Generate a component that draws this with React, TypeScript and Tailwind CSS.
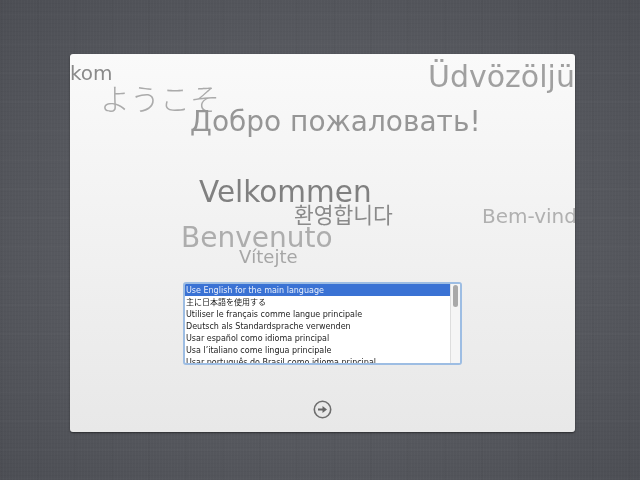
import React from 'react';

const WORDS = [
  { text: 'kom', className: 'left-0 top-[7px] text-[20px] leading-[24px] text-[#8a8a8a]' },
  { text: 'ようこそ', className: "left-[30px] top-[25px] text-[30px] leading-[36px] text-[#ababab] font-['Noto_Sans_CJK_JP',sans-serif] font-light" },
  { text: 'Üdvözöljü', className: 'left-[358px] top-[4px] text-[30px] leading-[38px] text-[#a0a0a0]' },
  { text: 'Добро пожаловать!', className: 'left-[120px] top-[50px] text-[28px] leading-[36px] text-[#969696]' },
  { text: 'Velkommen', className: 'left-[129px] top-[120px] text-[29.5px] leading-[36px] text-[#808080]' },
  { text: '환영합니다', className: "left-[224px] top-[147px] text-[21.5px] leading-[26px] text-[#8a8a8a] font-['Noto_Sans_CJK_KR',sans-serif]" },
  { text: 'Bem-vind', className: 'left-[412px] top-[149px] text-[20px] leading-[26px] text-[#b0b0b0]' },
  { text: 'Benvenuto', className: 'left-[111px] top-[166px] text-[28px] leading-[36px] text-[#adadad]' },
  { text: 'Vítejte', className: 'left-[169px] top-[191px] text-[18px] leading-[24px] text-[#a6a6a6]' },
];

const LANGUAGES = [
  'Use English for the main language',
  '主に日本語を使用する',
  'Utiliser le français comme langue principale',
  'Deutsch als Standardsprache verwenden',
  'Usar español como idioma principal',
  'Usa l’italiano come lingua principale',
  'Usar português do Brasil como idioma principal',
];

const App = () => {
  return (
    <div className="w-[640px] h-[480px] overflow-hidden pl-[70px] pt-[54px] bg-[#55575d] [background-image:repeating-linear-gradient(90deg,rgba(255,255,255,0.015)_0px,rgba(255,255,255,0.015)_1px,transparent_1px,transparent_3px),repeating-linear-gradient(0deg,rgba(0,0,0,0.025)_0px,rgba(0,0,0,0.025)_1px,transparent_1px,transparent_4px),repeating-linear-gradient(90deg,rgba(0,0,0,0.02)_0px,rgba(0,0,0,0.02)_2px,transparent_2px,transparent_37px),repeating-linear-gradient(0deg,rgba(255,255,255,0.012)_0px,rgba(255,255,255,0.012)_2px,transparent_2px,transparent_29px),radial-gradient(ellipse_at_center,#5c5e65_0%,#56585e_60%,#4c4e54_100%)] font-['DejaVu_Sans',sans-serif]">
      <div className="relative w-[505px] h-[378px] rounded-[3px] overflow-hidden flex flex-col items-center bg-gradient-to-b from-[#fafafa] to-[#e8e8e8] shadow-[0_1px_2px_rgba(0,0,0,0.5)]">
        {WORDS.map(word => (
          <div key={word.text} className={`absolute whitespace-nowrap blur-[0.4px] ${word.className}`}>
            {word.text}
          </div>
        ))}

        {/* Language list */}
        <div className="mt-[228px] w-[279px] h-[83px] shrink-0 flex border-2 border-[#9dbde3] rounded-[3px] bg-white overflow-hidden blur-[0.3px]">
          <div className="flex-1 min-w-0 overflow-hidden">
            {LANGUAGES.map((lang, i) => (
              <div
                key={lang}
                className={`h-[12px] overflow-hidden pl-[1px] text-[8px] leading-[14px] whitespace-nowrap font-['DejaVu_Sans','Noto_Sans_CJK_JP',sans-serif] ${i === 0 ? 'bg-[#3a72d4] text-[#e8eefb]' : 'text-[#222222]'}`}
              >
                {lang}
              </div>
            ))}
          </div>
          <div className="w-[10px] shrink-0 border-l border-[#dddddd] bg-[#f5f5f5] pl-[2px] pt-[1px]">
            <div className="w-[5px] h-[22px] rounded-full bg-[#a9a9a9]" />
          </div>
        </div>

        {/* Continue arrow */}
        <div className="mt-[35px]">
          <svg width="19" height="19" viewBox="0 0 19 19" fill="none">
            <circle cx="9.5" cy="9.5" r="8.2" stroke="#6e6e6e" strokeWidth="1.6" />
            <path d="M5 8.6H9.5V6L14 9.5L9.5 13V10.4H5Z" fill="#666666" />
          </svg>
        </div>
      </div>
    </div>
  );
};

export default App;
